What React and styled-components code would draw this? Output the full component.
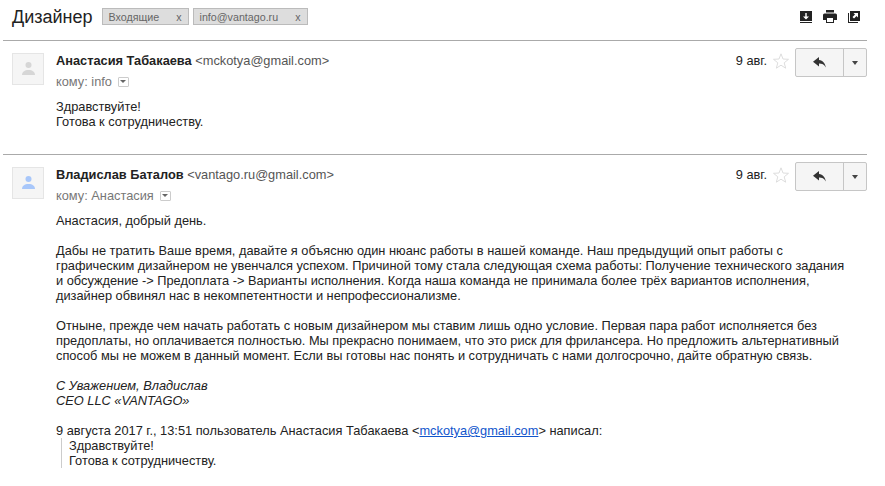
import React from 'react';
import styled, { createGlobalStyle } from 'styled-components';

const Global = createGlobalStyle`
  html, body { margin: 0; padding: 0; background: #fff; overflow: hidden; }
  body { font-family: "Liberation Sans", Arial, sans-serif; font-size: 12.8px; color: #222; }
`;

const Page = styled.div`
  width: 885px;
  height: 486px;
  padding: 0 18px 0 3px;
  box-sizing: border-box;
`;

const Header = styled.div`
  display: flex;
  align-items: center;
  height: 40px;
  padding-left: 9px;
  padding-bottom: 7px;
  box-sizing: border-box;
`;

const Subject = styled.h1`
  margin: 0 9px 0 0;
  font-size: 18px;
  font-weight: normal;
  line-height: 22px;
  color: #222;
`;

const Tag = styled.div`
  display: flex;
  justify-content: space-between;
  align-items: center;
  box-sizing: border-box;
  width: ${p => p.$width}px;
  height: 17px;
  margin-right: 4px;
  padding: 0 6px;
  background: #ddd;
  border: 1px solid #bbb;
  font-size: 10.7px;
  color: #666;
`;

const HeaderIcons = styled.div`
  display: flex;
  align-items: center;
  gap: 11px;
  margin-left: auto;
  margin-right: 7px;
`;

const Message = styled.div`
  display: grid;
  grid-template-columns: 32px 1fr;
  column-gap: 12px;
  padding: 12px 0 0 9px;
  border-top: 1px solid #aaa;
  height: ${p => p.$height}px;
  box-sizing: border-box;
`;

const Avatar = styled.div`
  width: 32px;
  height: 32px;
  box-sizing: border-box;
  background: #f5f5f5;
  border: 1px solid #e5e5e5;
  display: flex;
  align-items: center;
  justify-content: center;
`;

const Meta = styled.div`
  display: flex;
  justify-content: space-between;
  align-items: flex-start;
  height: 46px;
`;

const Sender = styled.div`
  line-height: 15px;
`;

const Name = styled.b`
  color: #222;
`;

const Email = styled.span`
  color: #555;
`;

const Recipient = styled.div`
  display: flex;
  align-items: center;
  gap: 6px;
  margin-top: 6px;
  line-height: 15px;
  color: #777;
`;

const Caret = styled.span`
  width: 11px;
  height: 10px;
  box-sizing: border-box;
  border: 1px solid #ccc;
  border-radius: 1px;
  display: flex;
  align-items: center;
  justify-content: center;
  &::after {
    content: '';
    border-left: 3px solid transparent;
    border-right: 3px solid transparent;
    border-top: 3px solid #666;
  }
`;

const Actions = styled.div`
  display: flex;
  align-items: flex-start;
`;

const DateText = styled.span`
  line-height: 15px;
  color: #222;
  margin-right: 6px;
`;

const ReplyGroup = styled.div`
  display: flex;
  height: 29px;
  box-sizing: border-box;
  margin-left: 6px;
  margin-top: -5px;
  border: 1px solid #c6c6c6;
  border-radius: 2px;
  background: #f5f5f5;
`;

const ReplyButton = styled.div`
  width: 48px;
  box-sizing: border-box;
  display: flex;
  align-items: center;
  justify-content: center;
  border-right: 1px solid #c6c6c6;
`;

const MoreButton = styled.div`
  width: 22px;
  display: flex;
  align-items: center;
  justify-content: center;
  &::after {
    content: '';
    border-left: 3.5px solid transparent;
    border-right: 3.5px solid transparent;
    border-top: 4px solid #444;
  }
`;

const Body = styled.div`
  line-height: 15px;
  color: #222;
`;

const Para = styled.p`
  margin: 0 0 15px;
`;

const Signature = styled(Para)`
  font-style: italic;
`;

const MailLink = styled.span`
  color: #15c;
  text-decoration: underline;
`;

const Quote = styled.div`
  margin-left: 5px;
  padding-left: 7px;
  border-left: 1px solid #ccc;
`;

const DownloadIcon = () => (
  <svg width="12" height="12" viewBox="0 0 12 12">
    <rect width="12" height="10" fill="#222" />
    <rect y="11" width="12" height="1" fill="#222" />
    <path d="M5.3 2h1.4v3.500H9L6 8.500 3 5.500h2.300z" fill="#fff" />
  </svg>
);

const PrintIcon = () => (
  <svg width="14" height="13" viewBox="0 0 14 13">
    <path d="M3 0h8v2.500H3z" fill="#222" />
    <path d="M1.500 3.500h11A1.500 1.500 0 0 1 14 5v5h-3v3H3v-3H0V5a1.500 1.500 0 0 1 1.500-1.500z" fill="#222" />
    <rect x="4" y="8" width="6" height="4" fill="#fff" />
  </svg>
);

const ExpandIcon = () => (
  <svg width="12" height="12" viewBox="0 0 12 12">
    <rect x="2" width="10" height="10" fill="#222" />
    <path d="M0 2h1v9h9v1H0z" fill="#222" />
    <path d="M5.500 2h4.500v4.500L8.500 5 6 7.500 4.500 6 7 3.500z" fill="#fff" />
  </svg>
);

const StarIcon = () => (
  <svg width="16" height="16" viewBox="0 0 16 16">
    <path d="M8 .8l2 5.200 5.500.300-4.300 3.500 1.500 5.400L8 12.200l-4.700 3 1.500-5.400L.5 6.300 6 6z" fill="none" stroke="#ddd" />
  </svg>
);

const ReplyIcon = () => (
  <svg width="13" height="11" viewBox="0 0 13 11">
    <path d="M6 0L0 4.700l6 4.700V6.600c3 0 5.200 1 6.800 3.900C12.300 6.500 10 3.500 6 3z" fill="#333" />
  </svg>
);

const PersonIcon = ({ color }) => (
  <svg width="13" height="14" viewBox="0 0 13 14">
    <circle cx="6.500" cy="3" r="3" fill={color} />
    <path d="M0 13c0-3 2.500-5 6.500-5s6.500 2 6.500 5z" fill={color} />
  </svg>
);

const MessageRow = ({ name, email, to, person, height, children }) => (
  <Message $height={height}>
    <Avatar><PersonIcon color={person} /></Avatar>
    <div>
      <Meta>
        <div>
          <Sender><Name>{name}</Name> <Email>&lt;{email}&gt;</Email></Sender>
          <Recipient>кому: {to} <Caret /></Recipient>
        </div>
        <Actions>
          <DateText>9 авг.</DateText>
          <StarIcon />
          <ReplyGroup>
            <ReplyButton><ReplyIcon /></ReplyButton>
            <MoreButton />
          </ReplyGroup>
        </Actions>
      </Meta>
      <Body>{children}</Body>
    </div>
  </Message>
);

export default function App() {
  return (
    <Page>
      <Global />
      <Header>
        <Subject>Дизайнер</Subject>
        <Tag $width={87}><span>Входящие</span><span>x</span></Tag>
        <Tag $width={115}><span>info@vantago.ru</span><span>x</span></Tag>
        <HeaderIcons>
          <DownloadIcon />
          <PrintIcon />
          <ExpandIcon />
        </HeaderIcons>
      </Header>
      <MessageRow name="Анастасия Табакаева" email="mckotya@gmail.com" to="info" person="#d6d6d6" height={114}>
        <Para>Здравствуйте!<br />Готова к сотрудничеству.</Para>
      </MessageRow>
      <MessageRow name="Владислав Баталов" email="vantago.ru@gmail.com" to="Анастасия" person="#a8c7fa" height={332}>
        <Para>Анастасия, добрый день.</Para>
        <Para>
          Дабы не тратить Ваше время, давайте я объясню один нюанс работы в нашей команде. Наш предыдущий опыт работы с<br />
          графическим дизайнером не увенчался успехом. Причиной тому стала следующая схема работы: Получение технического задания<br />
          и обсуждение -&gt; Предоплата -&gt; Варианты исполнения. Когда наша команда не принимала более трёх вариантов исполнения,<br />
          дизайнер обвинял нас в некомпетентности и непрофессионализме.
        </Para>
        <Para>
          Отныне, прежде чем начать работать с новым дизайнером мы ставим лишь одно условие. Первая пара работ исполняется без<br />
          предоплаты, но оплачивается полностью. Мы прекрасно понимаем, что это риск для фрилансера. Но предложить альтернативный<br />
          способ мы не можем в данный момент. Если вы готовы нас понять и сотрудничать с нами долгосрочно, дайте обратную связь.
        </Para>
        <Signature>С Уважением, Владислав<br />CEO LLC «VANTAGO»</Signature>
        <div>9 августа 2017 г., 13:51 пользователь Анастасия Табакаева &lt;<MailLink>mckotya@gmail.com</MailLink>&gt; написал:</div>
        <Quote>Здравствуйте!<br />Готова к сотрудничеству.</Quote>
      </MessageRow>
    </Page>
  );
}
